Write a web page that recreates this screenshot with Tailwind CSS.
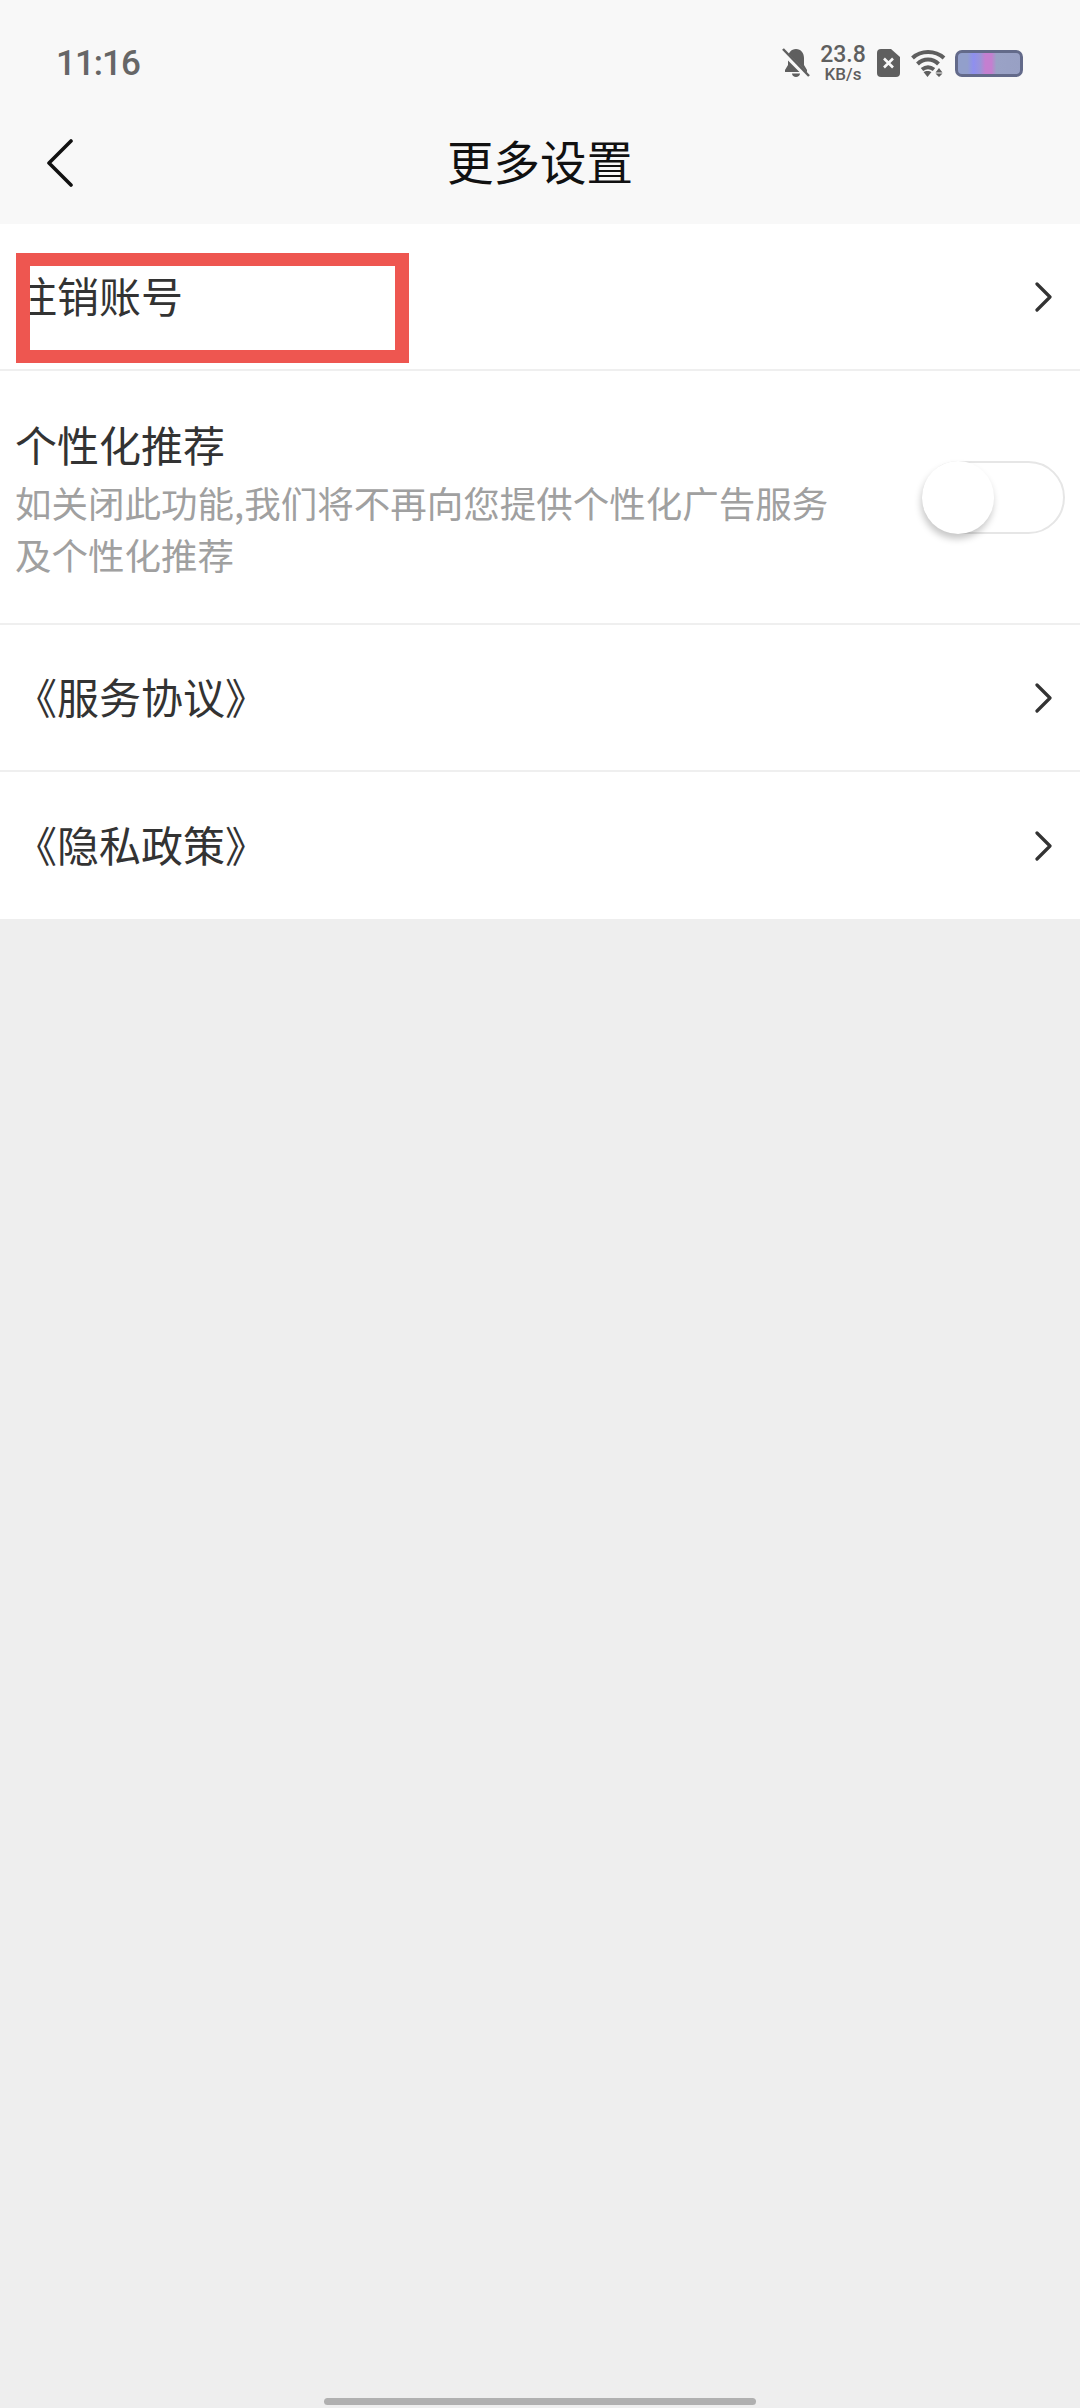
<!DOCTYPE html>
<html lang="zh-CN">
  <head>
    <meta charset="UTF-8" />
    <meta name="viewport" content="width=device-width, initial-scale=1.0" />
    <title>更多设置</title>
    <script src="https://cdn.jsdelivr.net/npm/@tailwindcss/browser@4"></script>
  </head>
  <body class="h-[2408px] w-[1080px] overflow-hidden bg-[#eeeeee] font-['Noto_Sans_CJK_SC',sans-serif]">
    <div class="relative flex h-full flex-col">
      <!-- Status + nav -->
      <header class="h-[224px] bg-[#f8f8f8]">
        <div class="flex h-[126px] items-center justify-between pl-[56px] pr-[57px]">
          <span class="mt-[2px] font-['Roboto',sans-serif] text-[35px] font-medium tracking-[-1px] text-[#666666]">11:16</span>
          <div class="flex items-center text-[#5f5f5f]">
            <svg class="h-[30px] w-[28px]" viewBox="0 0 28 30">
              <path fill="#5f5f5f" d="M14 1c5 0 8 4 8 9v7l3 5v2H3v-2l3-5v-7c0-5 3-9 8-9zM10 25.500h8c0 2-2 3.500-4 3.500s-4-1.500-4-3.500z" />
              <path stroke="#f8f8f8" stroke-width="5" d="M0 3l26 26" />
              <path stroke="#5f5f5f" stroke-width="2.500" d="M1 1l26 27" />
            </svg>
            <div class="ml-[10px] flex w-[46px] flex-col items-center font-['Roboto',sans-serif] font-medium">
              <span class="text-[23px] leading-[22px]">23.8</span>
              <span class="text-[17px] leading-[17px]">KB/s</span>
            </div>
            <svg class="ml-[11px] h-[28px] w-[23px]" viewBox="0 0 23 28">
              <path fill="#5f5f5f" d="M4 0h10l9 8v16a4 4 0 0 1-4 4H4a4 4 0 0 1-4-4V4a4 4 0 0 1 4-4z" />
              <path stroke="#f8f8f8" stroke-width="2.600" d="M7 9.500l9 9M16 9.500l-9 9" />
            </svg>
            <svg class="ml-[11px] h-[28px] w-[35px]" viewBox="0 0 35 28" fill="none">
              <path stroke="#5f5f5f" stroke-width="4" d="M1.500 9C10 1 24 1 33 9M6.500 15c6-6 15-6 21 0M11 20.500c4-3 8-3 12 0" />
              <path fill="#5f5f5f" d="M12.500 23c2-1.500 6-1.500 8 0l-4 5zM28 19l3.500 4.500h-7zM24.500 24.500h7L28 28z" />
            </svg>
            <div class="ml-[9px] h-[27px] w-[68px] rounded-[7px] border-[3px] border-[#636a8a] bg-[linear-gradient(90deg,#929fcb_0%,#929fcb_15%,#8f8fef_25%,#9a94d8_36%,#c47fd0_44%,#c47fd0_54%,#9aa2c6_62%,#98a0c4_100%)]"></div>
          </div>
        </div>
        <div class="grid h-[68px] grid-cols-[1fr_auto_1fr] items-center">
          <svg class="mt-[6px] ml-[46px] h-[48px] w-[28px]" viewBox="0 0 28 48" fill="none">
            <path stroke="#111111" stroke-width="3.600" stroke-linecap="round" stroke-linejoin="round" d="M25 2L3 24l22 22" />
          </svg>
          <h1 class="text-[46.500px] leading-none font-normal text-[#111111]">更多设置</h1>
        </div>
      </header>

      <!-- Setting rows -->
      <section class="bg-white text-[42px] text-[#333333]">
        <div class="flex h-[147px] items-center justify-between border-b-2 border-[#efefef] pl-[15px] pr-[28px]">
          <span class="-mt-[3px] leading-none">注销账号</span>
          <svg class="h-[30px] w-[17px]" viewBox="0 0 17 30" fill="none">
            <path stroke="#333333" stroke-width="3.200" stroke-linecap="round" stroke-linejoin="round" d="M2 2l13 13L2 28" />
          </svg>
        </div>
        <div class="flex h-[254px] items-start justify-between border-b-2 border-[#efefef] pl-[15px] pr-[15px]">
          <div class="w-[830px] pt-[52px]">
            <div class="leading-none">个性化推荐</div>
            <p class="mt-[12px] text-[36.500px] leading-[52px] text-[#a0a0a0]">如关闭此功能,我们将不再向您提供个性化广告服务及个性化推荐</p>
          </div>
          <div class="relative mt-[90px] h-[73px] w-[143px] rounded-full border-2 border-[#e6e6e6] bg-white">
            <div class="absolute -top-[2px] -left-[2px] h-[73px] w-[72px] rounded-full bg-white shadow-[-1px_5px_7px_rgba(0,0,0,0.22)]"></div>
          </div>
        </div>
        <div class="flex h-[147px] items-center justify-between border-b-2 border-[#efefef] pl-[15px] pr-[28px]">
          <span class="-mt-[3px] leading-none">《服务协议》</span>
          <svg class="h-[30px] w-[17px]" viewBox="0 0 17 30" fill="none">
            <path stroke="#333333" stroke-width="3.200" stroke-linecap="round" stroke-linejoin="round" d="M2 2l13 13L2 28" />
          </svg>
        </div>
        <div class="flex h-[147px] items-center justify-between pl-[15px] pr-[28px]">
          <span class="-mt-[3px] leading-none">《隐私政策》</span>
          <svg class="h-[30px] w-[17px]" viewBox="0 0 17 30" fill="none">
            <path stroke="#333333" stroke-width="3.200" stroke-linecap="round" stroke-linejoin="round" d="M2 2l13 13L2 28" />
          </svg>
        </div>
      </section>

      <!-- Red annotation box sits on top of the first row -->
      <div class="absolute top-[253px] left-[16px] h-[110px] w-[393px] border-x-[14px] border-y-[13px] border-[#ee5650]"></div>

      <!-- Home bar -->
      <div class="absolute bottom-[3px] left-[324px] h-[7px] w-[432px] rounded-full bg-[#b0b0b0]"></div>
    </div>
  </body>
</html>
